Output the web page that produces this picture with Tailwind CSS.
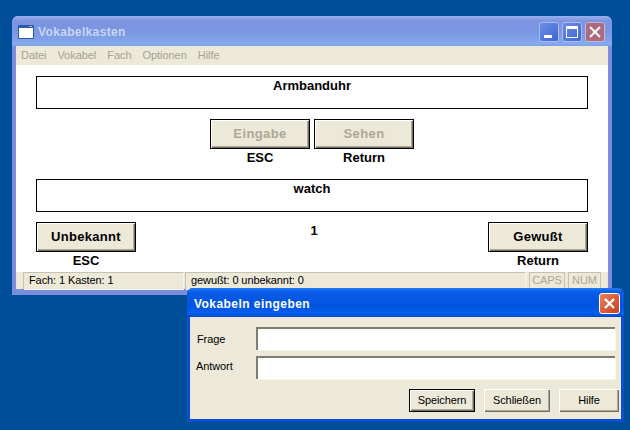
<!DOCTYPE html>
<html lang="de">
<head>
<meta charset="UTF-8">
<title>Vokabelkasten</title>
<script src="https://cdn.jsdelivr.net/npm/@tailwindcss/browser@4"></script>
</head>
<body class="m-0 overflow-hidden">
<div class="relative w-[630px] h-[430px] bg-[#004e98] font-['Liberation_Sans',sans-serif] text-black overflow-hidden">

  <!-- main window -->
  <div class="absolute left-[12px] top-[16px] w-[600px] h-[279px] flex flex-col rounded-t-[6px] bg-[#7b8edc] px-[4px] pb-[6px]">
    <div class="-mx-[4px] h-[30px] shrink-0 flex items-center pt-[2px] pl-[6px] pr-[7px] rounded-t-[6px] bg-[linear-gradient(180deg,#98b0ec_0px,#7d94e0_5px,#7a96e2_16px,#86a9ec_28px,#7d9be4_30px)]">
      <svg class="w-[16px] h-[14px] shrink-0" viewBox="0 0 16 14">
        <rect x="0" y="0" width="16" height="14" rx="1" fill="#2a5cae"/>
        <rect x="1" y="3" width="14" height="10" fill="#fff"/>
        <rect x="11" y="1" width="3" height="1" fill="#e8a050"/>
      </svg>
      <span class="ml-[4px] text-[12px] font-bold tracking-[0.35px] text-[#c9d6f8]">Vokabelkasten</span>
      <div class="ml-auto flex gap-[3px]">
        <div class="relative w-[20px] h-[20px] rounded-[3px] border border-[#a9bdf0] bg-[linear-gradient(135deg,#6d8ce4,#3e66d8)]">
          <div class="absolute left-[4px] top-[12px] w-[8px] h-[3px] bg-white"></div>
        </div>
        <div class="w-[20px] h-[20px] rounded-[3px] border border-[#a9bdf0] bg-[linear-gradient(135deg,#6d8ce4,#3e66d8)] p-[3px]">
          <div class="w-full h-full border border-t-[3px] border-white"></div>
        </div>
        <div class="w-[20px] h-[20px] rounded-[3px] border border-[#c4b4d8] bg-[#ad6a7e]">
          <svg viewBox="0 0 18 18" class="w-[18px] h-[18px]"><path d="M4 4l10 10M14 4L4 14" stroke="#fff" stroke-width="2"/></svg>
        </div>
      </div>
    </div>

    <div class="h-[19px] shrink-0 bg-[#ece9d8] flex items-center gap-[11px] pl-[5px] text-[11px] tracking-[-0.05px] text-[#a6a395]">
      <span>Datei</span><span>Vokabel</span><span>Fach</span><span>Optionen</span><span>Hilfe</span>
    </div>

    <div class="flex-1 bg-white flex flex-col px-[20px] pt-[11px] text-[13px] font-bold text-center leading-[15px]">
      <div class="h-[33px] pt-[1px] border border-black">Armbanduhr</div>

      <div class="mt-[10px] flex justify-center gap-[4px]">
        <div class="w-[100px]">
          <div class="h-[30px] pb-[1px] flex items-center justify-center border border-black bg-[#ece9d8] text-[#aca899] tracking-[0.4px] shadow-[inset_1px_1px_0_#fff,inset_-1px_-1px_0_#716f64,inset_-2px_-2px_0_#aca899]">Eingabe</div>
          <div class="mt-[1px]">ESC</div>
        </div>
        <div class="w-[100px]">
          <div class="h-[30px] pb-[1px] flex items-center justify-center border border-black bg-[#ece9d8] text-[#aca899] tracking-[0.4px] shadow-[inset_1px_1px_0_#fff,inset_-1px_-1px_0_#716f64,inset_-2px_-2px_0_#aca899]">Sehen</div>
          <div class="mt-[1px]">Return</div>
        </div>
      </div>

      <div class="mt-[14px] h-[33px] pt-[1px] border border-black">watch</div>

      <div class="mt-[10px] flex justify-between">
        <div class="w-[100px]">
          <div class="h-[30px] pb-[1px] flex items-center justify-center border border-black bg-[#ece9d8] tracking-[0.3px] shadow-[inset_1px_1px_0_#fff,inset_-1px_-1px_0_#716f64,inset_-2px_-2px_0_#aca899]">Unbekannt</div>
          <div class="mt-[1px]">ESC</div>
        </div>
        <div class="pl-[4px] pt-[1px]">1</div>
        <div class="w-[100px]">
          <div class="h-[30px] pb-[1px] flex items-center justify-center border border-black bg-[#ece9d8] tracking-[0.3px] shadow-[inset_1px_1px_0_#fff,inset_-1px_-1px_0_#716f64,inset_-2px_-2px_0_#aca899]">Gewußt</div>
          <div class="mt-[1px]">Return</div>
        </div>
      </div>
    </div>

    <div class="h-[17px] shrink-0 bg-[#ece9d8] flex gap-[2px] pl-[7px] pr-[7px] text-[11px] leading-[15px] tracking-[-0.1px]">
      <div class="w-[160px] border-t border-l border-t-[#c5c2b2] border-l-[#c5c2b2] shadow-[1px_1px_0_#f8f6ec] pl-[5px]">Fach: 1 Kasten: 1</div>
      <div class="w-[340px] border-t border-l border-t-[#c5c2b2] border-l-[#c5c2b2] shadow-[1px_1px_0_#f8f6ec] pl-[5px]">gewußt: 0 unbekannt: 0</div>
      <div class="ml-[2px] w-[36px] border border-[#c5c2b2] text-center text-[#aca899]">CAPS</div>
      <div class="ml-[1px] w-[33px] border border-[#c5c2b2] text-center text-[#aca899]">NUM</div>
    </div>
  </div>

  <!-- dialog -->
  <div class="absolute left-[187px] top-[288px] w-[437px] h-[134px] flex flex-col rounded-t-[6px] bg-[#0a4fd4] px-[3px] pb-[3px]">
    <div class="-mx-[3px] h-[29px] shrink-0 flex items-center pt-[2px] pl-[7px] pr-[4px] rounded-t-[6px] bg-[linear-gradient(180deg,#1f7cf2_0px,#0a5ce8_4px,#0054e0_18px,#0060ee_25px,#0048c8_29px)]">
      <span class="text-[12px] font-bold tracking-[0.45px] text-white">Vokabeln eingeben</span>
      <div class="ml-auto w-[21px] h-[21px] rounded-[3px] border border-white bg-[linear-gradient(135deg,#e8805c,#cc3f1e)]">
        <svg viewBox="0 0 19 19" class="w-[19px] h-[19px]"><path d="M5 5l9 9M14 5l-9 9" stroke="#fff" stroke-width="2.4"/></svg>
      </div>
    </div>

    <div class="flex-1 bg-[#ece9d8] pt-[10px] pl-[7px] pr-[2px] text-[11px] tracking-[-0.1px]">
      <div class="grid grid-cols-[59px_1fr] gap-y-[6px] items-center mr-[4px]">
        <span class="pt-[1px]">Frage</span>
        <div class="h-[23px] bg-white border-t-2 border-l-2 border-t-[#7f7d70] border-l-[#7f7d70] shadow-[1px_1px_0_#f8f6ec]"></div>
        <span class="-ml-[1px] pb-[2px]">Antwort</span>
        <div class="h-[23px] bg-white border-t-2 border-l-2 border-t-[#7f7d70] border-l-[#7f7d70] shadow-[1px_1px_0_#f8f6ec]"></div>
      </div>
      <div class="mt-[10px] flex justify-end">
        <div class="w-[66px] h-[23px] flex items-center justify-center border border-black shadow-[inset_1px_1px_0_#fff,inset_-1px_-1px_0_#716f64,inset_-2px_-2px_0_#aca899]">Speichern</div>
        <div class="ml-[9px] w-[66px] h-[23px] flex items-center justify-center shadow-[inset_1px_1px_0_#fff,inset_-1px_-1px_0_#716f64,inset_-2px_-2px_0_#aca899]">Schließen</div>
        <div class="ml-[9px] w-[60px] h-[23px] flex items-center justify-center shadow-[inset_1px_1px_0_#fff,inset_-1px_-1px_0_#716f64,inset_-2px_-2px_0_#aca899]">Hilfe</div>
      </div>
    </div>
  </div>
</div>
</body>
</html>
